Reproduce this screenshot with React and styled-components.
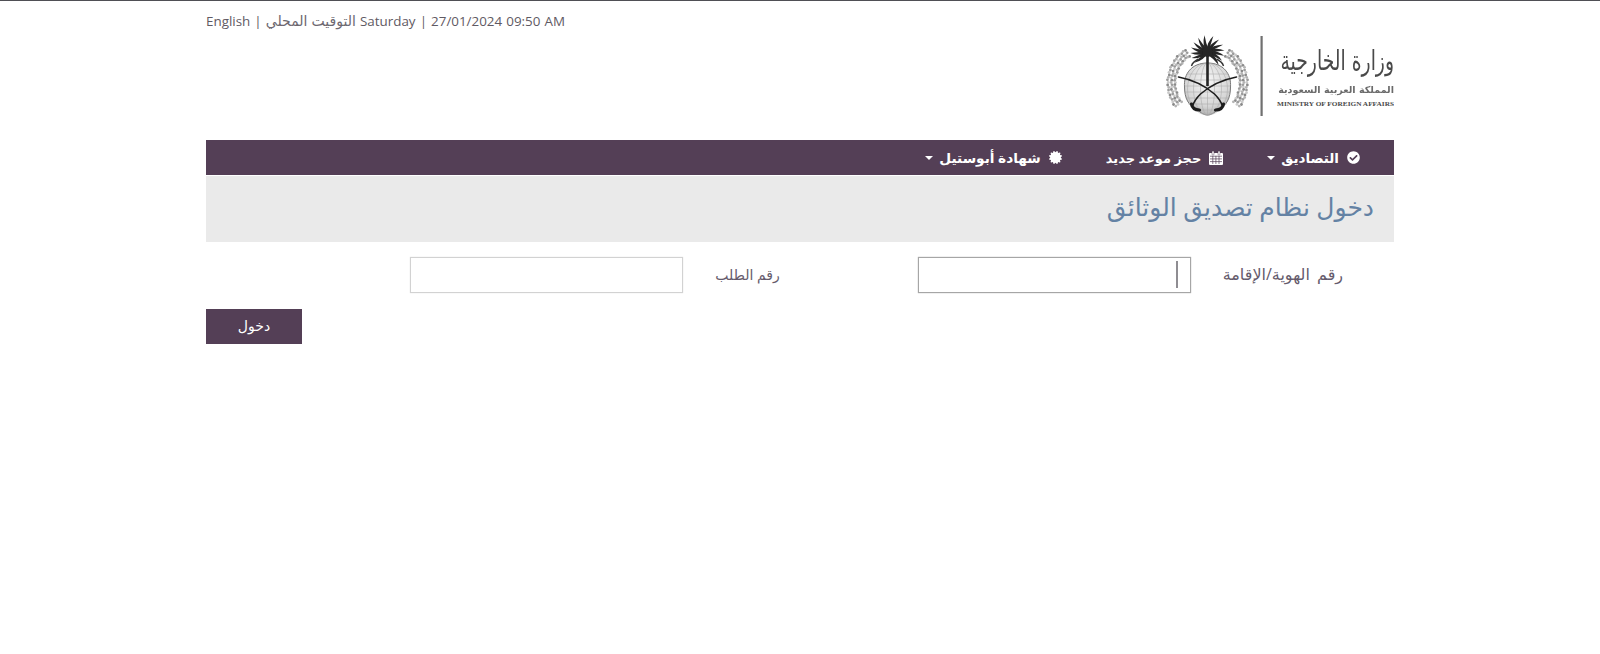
import React from "react";
import styled, { createGlobalStyle } from "styled-components";
import { FaCheckCircle, FaCertificate } from "react-icons/fa";

const Global = createGlobalStyle`
  html, body { margin: 0; padding: 0; background: #fff; }
  body { font-family: "Open Sans", "DejaVu Sans", sans-serif; color: #54405a; }
`;
const Page = styled.div`
  border-top: 1px solid #4f4f55;
  min-height: 653px;
  box-sizing: border-box;
  padding: 0 206px;
`;
const Header = styled.header`
  height: 139px;
  display: flex;
  justify-content: space-between;
  align-items: flex-start;
`;
const TopLine = styled.div`
  direction: ltr;
  font-size: 13.4px;
  line-height: 18px;
  word-spacing: 0.6px;
  padding-top: 11px;
  color: #5f5a63;
`;
const LocalTime = styled.span`
  font-size: 14px;
  color: #6d6870;
`;
const Logo = styled.svg`
  display: block;
  width: 232px;
  height: 84px;
  margin-top: 33px;
`;
const Nav = styled.nav`
  direction: rtl;
  height: 35px;
  background: #543f56;
  display: flex;
  align-items: center;
  gap: 44px;
  padding-right: 34px;
  margin-bottom: 1px;
`;
const NavItem = styled.a`
  display: flex;
  align-items: center;
  gap: 8px;
  color: #fff;
  font-size: ${(p) => p.$size || 14}px;
  font-weight: 700;
  svg { font-size: 13px; flex: none; }
`;
const Caret = styled.span`
  width: 0;
  height: 0;
  margin-right: -2px;
  border-top: 4px solid #fff;
  border-left: 4px solid transparent;
  border-right: 4px solid transparent;
`;
const Banner = styled.div`
  direction: rtl;
  height: 66px;
  background: #eaeaea;
  display: flex;
  align-items: center;
  padding: 0 20px 6px 0;
  box-sizing: border-box;
`;
const Title = styled.h1`
  margin: 0;
  font-size: 25px;
  font-weight: 400;
  color: #6482a4;
`;
const FormRow = styled.div`
  direction: rtl;
  display: flex;
  align-items: center;
  gap: 138px;
  padding: 15px 51px 0 0;
`;
const Field = styled.label`
  display: flex;
  align-items: center;
  gap: 32px;
  color: #655b6c;
`;
const FieldText = styled.span`
  font-size: ${(p) => p.$size || 14}px;
  word-spacing: ${(p) => p.$words || 0}px;
  padding-bottom: 2px;
`;
const InputBox = styled.span`
  position: relative;
  display: block;
  width: 273px;
  height: 36px;
`;
const Input = styled.input`
  display: block;
  box-sizing: border-box;
  width: 100%;
  height: 100%;
  padding: 0 12px;
  background: #fff;
  outline: none;
  border: 1px solid ${(p) => (p.$active ? "#a6a6a6" : "#d2d2d2")};
  box-shadow: 0 0 1px ${(p) => (p.$active ? "#a6a6a6" : "#dcdcdc")};
`;
const Caretbar = styled.span`
  position: absolute;
  top: 4px;
  right: 13px;
  width: 2px;
  height: 27px;
  background: #8f8d92;
`;
const Submit = styled.button`
  display: block;
  width: 96px;
  height: 35px;
  margin-top: 16px;
  padding: 0 0 2px;
  border: none;
  background: #543f56;
  color: #fff;
  font: 400 14px "Open Sans", "DejaVu Sans", sans-serif;
`;

const CX = 45.5;
const wreathDots = (side) => {
  const out = [];
  const radii = [32, 35.5, 39];
  radii.forEach((r, ri) => {
    for (let i = 0; i < 26; i++) {
      const a = (34 + (i / 25) * 92) * (Math.PI / 180);
      const wob = ((i * 7 + ri * 3) % 5) * 0.3;
      const x = CX + side * Math.sin(a) * (r + wob);
      const y = 49 - Math.cos(a) * (r + wob);
      const tone = ["#8a8a8a", "#b4b4b4", "#9c9c9c", "#cacaca"][(i + ri * 2) % 4];
      out.push(<circle key={`${ri}-${i}`} cx={x} cy={y} r={1.4} fill={tone} />);
    }
  });
  return out;
};

const FROND_ANGLES = [-75, -52, -30, -10, 8, 26, 44, -105, -128, -150, -170, 172, 154, 136];
const Fronds = () => (
  <g>
    {FROND_ANGLES.map((r) => (
      <path
        key={r}
        d="M0 -1 Q9 -3.5 17 1.5 Q9 0.5 0 2Z"
        fill="#262626"
        transform={`translate(${CX} 18) rotate(${r})`}
      />
    ))}
    <ellipse cx={CX} cy="18" rx="5" ry="5" fill="#262626" />
    <path d={`M${CX - 9} 25 Q${CX - 15} 28 ${CX - 16} 32 M${CX + 9} 25 Q${CX + 15} 28 ${CX + 16} 32`} stroke="#333" strokeWidth="1.4" fill="none" />
  </g>
);

const Globe = () => (
  <g>
    <path
      d={`M${CX} 29 C${CX + 16} 29 ${CX + 24} 40 ${CX + 23} 53 C${CX + 23} 64 ${CX + 19} 72 ${CX + 11} 75 C${CX + 7} 79 ${CX + 3} 81 ${CX} 81 C${CX - 3} 81 ${CX - 7} 79 ${CX - 11} 75 C${CX - 19} 72 ${CX - 23} 64 ${CX - 23} 53 C${CX - 24} 40 ${CX - 16} 29 ${CX} 29Z`}
      fill="url(#globe)"
      stroke="#777"
      strokeWidth="1"
    />
    <g stroke="#a9a9a9" strokeWidth="0.55" fill="none">
      <path d={`M${CX - 20} 40H${CX + 20}M${CX - 22} 46H${CX + 22}M${CX - 23} 52H${CX + 23}M${CX - 23} 58H${CX + 23}M${CX - 22} 64H${CX + 22}M${CX - 19} 70H${CX + 19}M${CX - 11} 76H${CX + 11}`} />
      <path d={`M${CX} 29V81`} />
      <ellipse cx={CX} cy="55" rx="7" ry="26" />
      <ellipse cx={CX} cy="55" rx="14" ry="26" />
      <ellipse cx={CX} cy="55" rx="20" ry="26" />
    </g>
  </g>
);

const Swords = () => (
  <g fill="none" stroke="#1f1f1f" strokeLinecap="round">
    <path d={`M${CX - 29} 43 Q${CX - 8} 47 ${CX + 7} 60 Q${CX + 13} 66 ${CX + 15} 72`} strokeWidth="1.6" />
    <path d={`M${CX + 29} 43 Q${CX + 8} 47 ${CX - 7} 60 Q${CX - 13} 66 ${CX - 15} 72`} strokeWidth="1.6" />
    <path d={`M${CX + 16} 70 Q${CX + 15} 76 ${CX + 8} 76`} strokeWidth="3.2" />
    <path d={`M${CX - 16} 70 Q${CX - 15} 76 ${CX - 8} 76`} strokeWidth="3.2" />
  </g>
);

const Emblem = () => (
  <g filter="url(#soft)">
    {wreathDots(1)}
    {wreathDots(-1)}
    <Globe />
    <rect x={CX - 1.3} y="18" width="2.6" height="34" fill="#262626" />
    <Fronds />
    <Swords />
  </g>
);

const Brand = () => (
  <Logo viewBox="0 0 232 84">
    <defs>
      <radialGradient id="globe" cx="0.5" cy="0.35" r="0.8">
        <stop offset="0" stopColor="#f6f6f6" />
        <stop offset="0.6" stopColor="#d6d6d6" />
        <stop offset="1" stopColor="#8f8f8f" />
      </radialGradient>
      <filter id="soft" x="-5%" y="-5%" width="110%" height="110%">
        <feGaussianBlur stdDeviation="0.4" />
      </filter>
    </defs>
    <Emblem />
    <rect x="98.5" y="2" width="2.2" height="80" fill="#707070" />
    <g filter="url(#soft)" direction="rtl">
      <text
        transform="translate(232 36) scale(1 1.45)"
        textAnchor="start"
        fontFamily="'DejaVu Sans', sans-serif"
        fontSize="18.8"
        fill="#4a4a4a"
      >
        وزارة الخارجية
      </text>
      <text x="232" y="58.5" textAnchor="start" fontFamily="'DejaVu Sans', sans-serif" fontSize="9.6" fontWeight="700" fill="#6a6a6a">
        المملكة العربية السعودية
      </text>
    </g>
    <text x="232" y="72" textAnchor="end" textLength="117" lengthAdjust="spacingAndGlyphs" fontFamily="'Liberation Serif', serif" fontSize="6.8" fontWeight="700" fill="#4a4a4a">
      MINISTRY OF FOREIGN AFFAIRS
    </text>
  </Logo>
);

const CalendarIcon = () => (
  <svg width="14" height="14" viewBox="0 0 14 14">
    <rect x="0" y="2" width="14" height="12" rx="1" fill="#fff" />
    <rect x="3" y="0" width="2" height="4" rx="0.8" fill="#fff" stroke="#543f56" strokeWidth="0.5" />
    <rect x="9" y="0" width="2" height="4" rx="0.8" fill="#fff" stroke="#543f56" strokeWidth="0.5" />
    <path d="M1 5.2H13M1 7.9H13M1 10.6H13M3.8 5V13M6.9 5V13M10 5V13" stroke="#543f56" strokeWidth="0.7" fill="none" />
  </svg>
);

export default function App() {
  return (
    <Page>
      <Global />
      <Header>
        <TopLine>
          English | <LocalTime>التوقيت المحلي</LocalTime> Saturday | 27/01/2024 09:50 AM
        </TopLine>
        <Brand />
      </Header>
      <Nav>
        <NavItem $size={13.5}>
          <FaCheckCircle />
          التصاديق
          <Caret />
        </NavItem>
        <NavItem $size={13}>
          <CalendarIcon />
          حجز موعد جديد
        </NavItem>
        <NavItem $size={13.7}>
          <FaCertificate />
          شهادة أبوستيل
          <Caret />
        </NavItem>
      </Nav>
      <Banner>
        <Title>دخول نظام تصديق الوثائق</Title>
      </Banner>
      <FormRow>
        <Field>
          <FieldText $size={16} $words={3}>رقم الهوية/الإقامة</FieldText>
          <InputBox>
            <Input $active />
            <Caretbar />
          </InputBox>
        </Field>
        <Field>
          <FieldText>رقم الطلب</FieldText>
          <InputBox>
            <Input />
          </InputBox>
        </Field>
      </FormRow>
      <Submit>دخول</Submit>
    </Page>
  );
}
